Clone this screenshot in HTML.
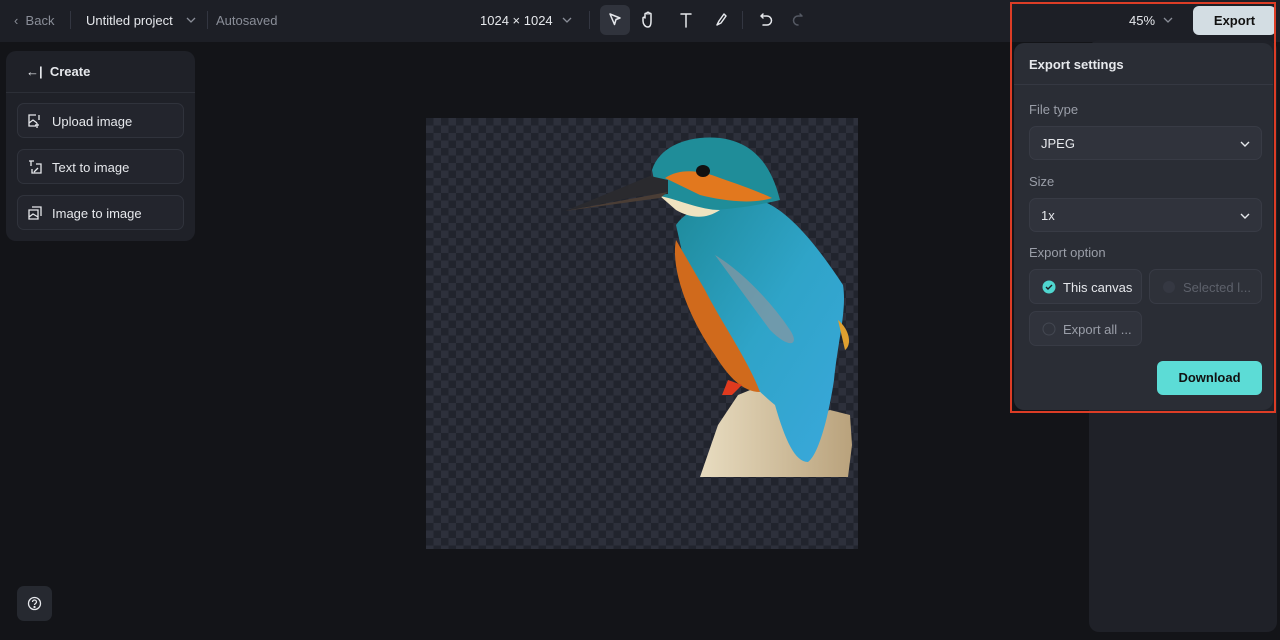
<!DOCTYPE html>
<html><head><meta charset="utf-8"><style>
*{box-sizing:border-box;margin:0;padding:0}
body{width:1280px;height:640px;overflow:hidden;background:#131418;font-family:"Liberation Sans",sans-serif;position:relative;color:#e6e8ec}
.abs{position:absolute}
.top{left:0;top:0;width:1280px;height:42px;background:#1d1f26}
.t{position:absolute;font-size:13px;white-space:nowrap}
.sep{position:absolute;width:1px;height:18px;background:#333641;top:11px}
.side{left:6px;top:51px;width:189px;height:190px;background:#1f2128;border-radius:10px}
.btn{position:absolute;left:11px;width:167px;height:35px;border:1px solid #30333c;border-radius:7px;background:#23252d;font-size:13px;color:#e6e8ec}
.btn span{position:absolute;left:34px;top:10px}
.checker{left:426px;top:118px;width:432px;height:431px;background-color:#21242d;background-image:linear-gradient(45deg,#2d303b 25%,transparent 25%,transparent 75%,#2d303b 75%),linear-gradient(45deg,#2d303b 25%,transparent 25%,transparent 75%,#2d303b 75%);background-size:15px 15px;background-position:0 0,7.5px 7.5px}
.rp{left:1089px;top:40px;width:188px;height:592px;background:#1f2128;border-radius:10px}
.panel{left:1014px;top:43px;width:259px;height:367px;background:#2a2d35;border-radius:10px}
.sel{position:absolute;left:15px;width:233px;height:34px;background:#30333c;border:1px solid #383b45;border-radius:7px;font-size:13px}
.lbl{position:absolute;left:15px;font-size:13px;color:#9a9ea8}
.opt{position:absolute;height:35px;width:113px;background:#30333c;border:1px solid #383b45;border-radius:7px;font-size:13px}
</style></head><body>
<div class="abs top"></div>
<div class="t" style="left:14px;top:13px;color:#8a8e98">&#8249;&nbsp; Back</div>
<div class="sep" style="left:70px"></div>
<div class="t" style="left:86px;top:13px">Untitled project</div>
<svg class="abs" style="left:186px;top:15px" width="10" height="10"><path d="M1 3l4 4 4-4" stroke="#8a8e98" fill="none" stroke-width="1.3"/></svg>
<div class="sep" style="left:207px"></div>
<div class="t" style="left:216px;top:13px;color:#8a8e98">Autosaved</div>
<div class="t" style="left:480px;top:13px">1024 × 1024</div>
<svg class="abs" style="left:562px;top:15px" width="10" height="10"><path d="M1 3l4 4 4-4" stroke="#8a8e98" fill="none" stroke-width="1.3"/></svg>
<div class="sep" style="left:589px"></div>
<div class="abs" style="left:600px;top:5px;width:30px;height:30px;background:#30333c;border-radius:6px"></div>
<svg class="abs" style="left:600px;top:5px" width="220" height="30" fill="none" stroke="#e6e8ec" stroke-width="1.5" stroke-linejoin="round" stroke-linecap="round">
<path d="M10 9l10 4-4 1.5-1.5 5z"/>
<path d="M48 22c-3 0-5-3-5-6v-3c0-1 2-1 2 0v-4c0-1 2-1 2 0v-1c0-1 2-1 2 0v1c0-1 2-1 2 0v7c0 4-1 6-3 6z"/>
<path d="M81 9h10M86 9v13"/>
<path d="M124 9l-5 7-2 4 4-2 5-7z"/>
<path d="M161 11h6a4 4 0 010 9h-4M161 11l2-2M161 11l2 2"/>
<path d="M202 11h-4a4 4 0 000 9M202 11l-2-2" stroke="#555963"/>
</svg>
<div class="sep" style="left:742px"></div>
<div class="t" style="left:1129px;top:13px">45%</div>
<svg class="abs" style="left:1163px;top:15px" width="10" height="10"><path d="M1 3l4 4 4-4" stroke="#8a8e98" fill="none" stroke-width="1.3"/></svg>
<div class="abs" style="left:1193px;top:6px;width:83px;height:29px;background:#d3dde3;border-radius:6px;color:#111;font-weight:bold;font-size:13px;text-align:center;line-height:29px">Export</div>

<div class="abs side">
 <div class="t" style="left:20px;top:13px;font-weight:bold">&#8592;| &nbsp;Create</div>
 <div class="abs" style="left:0;top:41px;width:189px;height:1px;background:#2c2f37"></div>
 <div class="btn" style="top:52px"><svg class="abs" style="left:10px;top:10px" width="14" height="14" fill="none" stroke="#e6e8ec" stroke-width="1.3"><path d="M8 1H1v11h7M1 9l4-3 4 3M9 9v5M7 11h4M11 1v5"/></svg><span>Upload image</span></div>
 <div class="btn" style="top:98px"><svg class="abs" style="left:10px;top:10px" width="14" height="14" fill="none" stroke="#e6e8ec" stroke-width="1.3"><path d="M1 1h5M3 1v5M8 4h5v9H4V9M6 12l4-4"/></svg><span>Text to image</span></div>
 <div class="btn" style="top:144px"><svg class="abs" style="left:10px;top:10px" width="14" height="14" fill="none" stroke="#e6e8ec" stroke-width="1.3"><path d="M4 1h9v9M1 4h9v9H1zM1 11l4-3 5 3"/></svg><span>Image to image</span></div>
</div>

<div class="abs checker"></div>
<svg class="abs" style="left:0;top:0" width="1280" height="640">
<defs>
<linearGradient id="bl" x1="0" y1="0" x2="1" y2="1"><stop offset="0" stop-color="#1e8a9a"/><stop offset=".5" stop-color="#2fa4c8"/><stop offset="1" stop-color="#3aa8dc"/></linearGradient>
<linearGradient id="pe" x1="0" y1="0" x2="1" y2="0"><stop offset="0" stop-color="#e8dcc0"/><stop offset="1" stop-color="#b9a27c"/></linearGradient>
</defs>
<path d="M700 477L718 425 738 395 760 386 778 402 795 420 830 410 850 415 852 445 848 477Z" fill="url(#pe)"/>
<path d="M676 225C690 205 720 200 760 200 790 210 820 250 843 285 847 310 838 340 834 380 828 420 818 455 808 462 795 462 785 440 775 405 750 385 720 350 695 310 676 275Z" fill="url(#bl)"/>
<path d="M676 240C670 270 690 320 715 355 730 380 745 392 760 392 748 360 720 320 705 290 695 260 690 240Z" fill="#d06a1c"/>
<path d="M715 255C740 270 770 300 790 330 800 345 790 350 770 330 745 300 725 285Z" fill="#8a95a0" opacity=".7"/>
<path d="M728 380L722 395 732 395 742 385Z" fill="#e03a1e"/>
<path d="M838 320C850 330 852 345 845 350 838 345Z" fill="#e0a030"/>
<path d="M652 170C660 145 690 135 720 138 750 142 770 160 780 200 760 205 730 210 705 210 680 212 660 200 655 185Z" fill="#1f8d99"/>
<path d="M665 178C680 168 700 170 720 178 740 185 755 190 772 198 750 205 720 200 700 195 680 192 667 190Z" fill="#e2781e"/>
<path d="M660 196C680 200 700 210 720 210 705 220 690 218 676 210Z" fill="#efe3c0"/>
<ellipse cx="703" cy="171" rx="7" ry="6" fill="#111"/>
<path d="M565 211L650 176 668 180 668 194 640 196Z" fill="#2a2a2e"/>
<path d="M565 211L668 192 660 198Z" fill="#4a3d35"/>
</svg>

<div class="abs rp"></div>
<div class="abs panel">
 <div class="t" style="left:15px;top:14px;font-weight:bold">Export settings</div>
 <div class="abs" style="left:0;top:41px;width:259px;height:1px;background:#353842"></div>
 <div class="lbl" style="top:59px">File type</div>
 <div class="sel" style="top:83px"><span class="t" style="left:11px;top:9px">JPEG</span><svg class="abs" style="left:209px;top:11px" width="12" height="12"><path d="M2 4l4 4 4-4" stroke="#e6e8ec" fill="none" stroke-width="1.4"/></svg></div>
 <div class="lbl" style="top:131px">Size</div>
 <div class="sel" style="top:155px"><span class="t" style="left:11px;top:9px">1x</span><svg class="abs" style="left:209px;top:11px" width="12" height="12"><path d="M2 4l4 4 4-4" stroke="#e6e8ec" fill="none" stroke-width="1.4"/></svg></div>
 <div class="lbl" style="top:202px">Export option</div>
 <div class="opt" style="left:15px;top:226px"><svg class="abs" style="left:12px;top:10px" width="14" height="14"><circle cx="7" cy="7" r="6.5" fill="#4fd6cf"/><path d="M4 7l2 2 4-4" stroke="#1a1c22" fill="none" stroke-width="1.4"/></svg><span class="t" style="left:33px;top:10px">This canvas</span></div>
 <div class="opt" style="left:135px;top:226px;background:#2e3139"><svg class="abs" style="left:12px;top:10px" width="14" height="14"><circle cx="7" cy="7" r="6" fill="#353842"/></svg><span class="t" style="left:33px;top:10px;color:#5d616b">Selected l...</span></div>
 <div class="opt" style="left:15px;top:268px"><svg class="abs" style="left:12px;top:10px" width="14" height="14"><circle cx="7" cy="7" r="6" fill="none" stroke="#444852"/></svg><span class="t" style="left:33px;top:10px;color:#9a9ea8">Export all ...</span></div>
 <div class="abs" style="left:143px;top:318px;width:105px;height:34px;background:#5cdcd6;border-radius:6px;color:#111;font-weight:bold;font-size:13px;text-align:center;line-height:34px">Download</div>
</div>
<div class="abs" style="left:1010px;top:2px;width:266px;height:411px;border:2px solid #dc3d26"></div>

<div class="abs" style="left:17px;top:586px;width:35px;height:35px;background:#262930;border-radius:7px"></div>
<svg class="abs" style="left:27px;top:596px" width="15" height="15" fill="none" stroke="#e6e8ec" stroke-width="1.3"><circle cx="7.5" cy="7.5" r="6"/><path d="M5.5 6a2 2 0 114 0c0 1.5-2 1.5-2 3"/><circle cx="7.5" cy="11" r=".5"/></svg>
</body></html>
